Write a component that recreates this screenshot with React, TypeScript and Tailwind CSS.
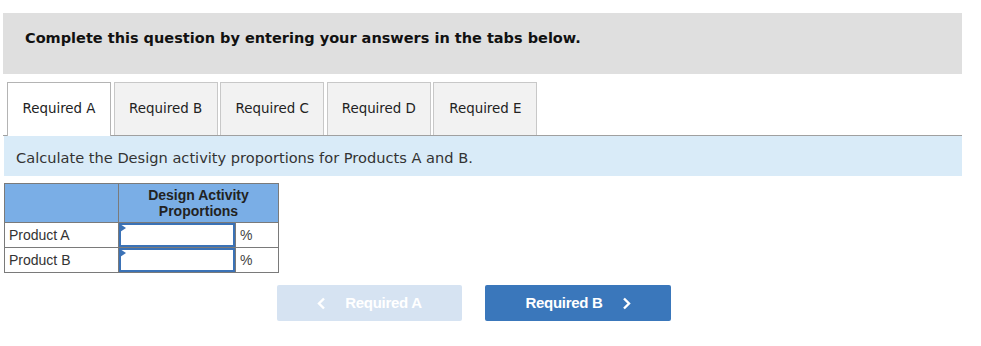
import React from "react";

const tabs = ["Required A", "Required B", "Required C", "Required D", "Required E"];

const rows = ["Product A", "Product B"];

function Chevron({ dir }: { dir: "left" | "right" }) {
  return (
    <svg width="9" height="13" viewBox="0 0 9 13" className="shrink-0">
      <path
        d={dir === "left" ? "M7 1.5 L2 6.5 L7 11.5" : "M2 1.5 L7 6.5 L2 11.5"}
        fill="none"
        stroke="white"
        strokeWidth="2.4"
      />
    </svg>
  );
}

export default function App() {
  return (
    <div className="w-[981px] h-[346px] bg-white pt-[13px] pl-[3px]">
      <div className="w-[959px]">
        {/* header */}
        <div className="h-[61px] bg-[#dfdfdf] pt-[15px] pl-[22px] font-['DejaVu_Sans',sans-serif] font-bold text-[14.5px] leading-[20px] text-[#111]">
          Complete this question by entering your answers in the tabs below.
        </div>

        {/* tabs */}
        <div className="mt-[8px] flex items-end gap-[2.6px] pl-[4px] border-b border-[#a0a0a0]">
          {tabs.map((t, i) => (
            <div
              key={t}
              className={
                i === 0
                  ? "relative -mb-px w-[104px] h-[54px] bg-white border border-b-0 border-[#b4b4b4] flex items-center justify-center font-['DejaVu_Sans',sans-serif] text-[13.4px] text-[#222]"
                  : "w-[104px] h-[53px] bg-[#f2f2f2] border border-b-0 border-[#c8c8c8] flex items-center justify-center font-['DejaVu_Sans',sans-serif] text-[13.4px] text-[#222]"
              }
            >
              {t}
            </div>
          ))}
        </div>

        {/* instruction */}
        <div className="ml-px h-[40px] bg-[#d9ebf8] flex items-center pl-[12px] pt-[3px] font-['DejaVu_Sans',sans-serif] text-[14.6px] text-[#333]">
          Calculate the Design activity proportions for Products A and B.
        </div>

        {/* table */}
        <table className="mt-[7px] ml-px border-collapse font-['Liberation_Sans',Arial,sans-serif] text-[14px] text-[#222]">
          <thead>
            <tr className="bg-[#7aaee6] h-[39px]">
              <th className="w-[114px] border border-[#7a7a7a]"></th>
              <th colSpan={2} className="border border-[#7a7a7a] font-bold leading-[16px] text-[#222] pb-px">
                Design Activity
                <br />
                Proportions
              </th>
            </tr>
          </thead>
          <tbody>
            {rows.map((r) => (
              <tr key={r} className="h-[25px]">
                <td className="border border-[#7a7a7a] pl-[4px] text-[#333]">{r}</td>
                <td className="w-[117px] border border-[#7a7a7a] p-0">
                  <div className="relative h-[24px] border-2 border-[#3b72b6] bg-white">
                    <div className="absolute -left-px -top-px w-0 h-0 border-t-[4px] border-b-[4px] border-l-[6px] border-t-transparent border-b-transparent border-l-[#3b72b6]" />
                  </div>
                </td>
                <td className="w-[43px] border border-[#7a7a7a] pl-[4px] text-[#444]">%</td>
              </tr>
            ))}
          </tbody>
        </table>

        {/* nav buttons */}
        <div className="mt-[12px] ml-[274px] flex gap-[23px] font-['Liberation_Sans',Arial,sans-serif] font-bold text-[15px] text-white">
          <div className="w-[185px] h-[36px] rounded-[2px] bg-[#d6e3f2] flex items-center justify-center gap-[19px] tracking-[-0.3px]">
            <Chevron dir="left" />
            <span>Required A</span>
          </div>
          <div className="w-[186px] h-[36px] rounded-[2px] bg-[#3a77bb] flex items-center justify-center gap-[19px] tracking-[-0.3px]">
            <span>Required B</span>
            <Chevron dir="right" />
          </div>
        </div>
      </div>
    </div>
  );
}
